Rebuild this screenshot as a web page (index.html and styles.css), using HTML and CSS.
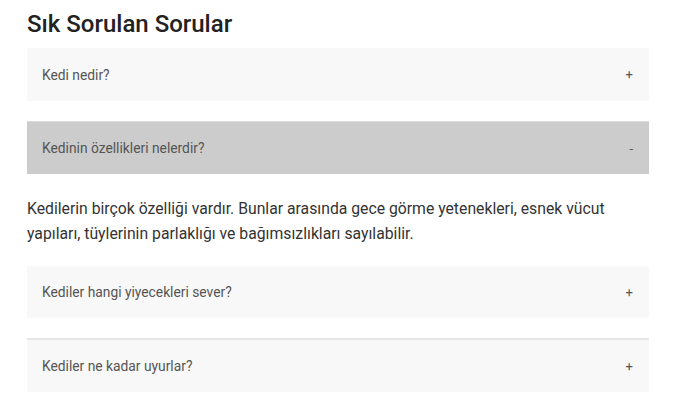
FILE: index.html
```html
<!DOCTYPE html>
<html lang="tr">
<head>
  <meta charset="UTF-8">
  <title>Sık Sorulan Sorular</title>
  <link rel="stylesheet" href="styles.css">
</head>
<body>
  <main class="faq">
    <h1>Sık Sorulan Sorular</h1>

    <div class="item">
      <a class="question" href="javascript:;">Kedi nedir? <span class="sign">+</span></a>
    </div>

    <div class="item open">
      <a class="question" href="javascript:;">Kedinin özellikleri nelerdir? <span class="sign">-</span></a>
      <p class="answer">Kedilerin birçok özelliği vardır. Bunlar arasında gece görme yetenekleri, esnek vücut yapıları, tüylerinin parlaklığı ve bağımsızlıkları sayılabilir.</p>
    </div>

    <div class="item">
      <a class="question" href="javascript:;">Kediler hangi yiyecekleri sever? <span class="sign">+</span></a>
    </div>

    <div class="item last">
      <a class="question" href="javascript:;">Kediler ne kadar uyurlar? <span class="sign">+</span></a>
    </div>
  </main>
</body>
</html>
```

FILE: styles.css
```css
body {
  margin: 0;
  font-family: Roboto, "Liberation Sans", sans-serif;
  color: #333;
}
.faq {
  width: 622px;
  padding: 0 27px;
}
h1 {
  margin: 10px 0 9px;
  font-size: 24px;
  line-height: 29px;
  font-weight: 500;
  color: #222;
}
.item {
  margin-bottom: 20px;
}
.item:first-of-type .question {
  height: 53px;
}
.item.last {
  border-top: 2px solid #e6e6e6;
}
.question {
  display: flex;
  justify-content: space-between;
  align-items: center;
  height: 52px;
  padding: 0 16px 0 15px;
  background: #f8f8f8;
  color: #555;
  font-size: 13.8px;
  text-decoration: none;
}
.open .question {
  background: #ccc;
  border-top: 1px solid #ddd;
}
.sign {
  font-size: 13px;
  color: #555;
}
.answer {
  margin: 22px 0 20px;
  font-size: 15.75px;
  line-height: 25px;
  color: #333;
}
.open {
  margin-bottom: 0;
}
```
